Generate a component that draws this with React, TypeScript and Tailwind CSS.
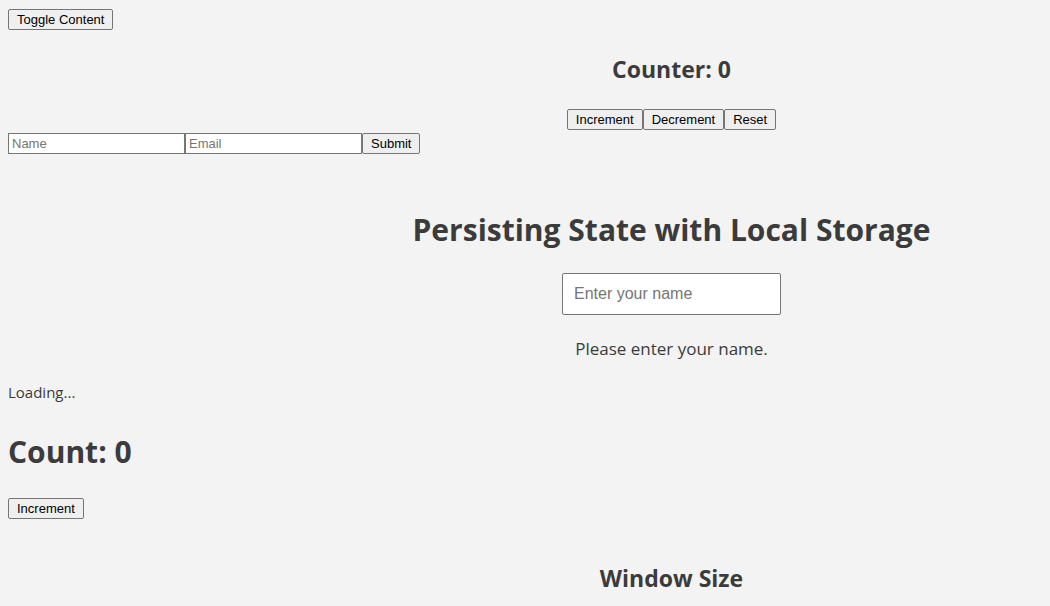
import { useState } from "react";
import type { ButtonHTMLAttributes, FormEvent } from "react";

function Button(props: ButtonHTMLAttributes<HTMLButtonElement>) {
  return (
    <button
      type="button"
      {...props}
      className="h-[21px] rounded-[2px] border border-[#767676] bg-[#efefef] px-2 text-[13px] leading-[15px] text-black font-['Liberation_Sans',Arial,sans-serif]"
    />
  );
}

const field =
  "h-[21px] w-[177px] border border-[#767676] bg-white px-[3px] text-[13px] leading-[15px] text-black placeholder:text-[#757575] font-['Liberation_Sans',Arial,sans-serif]";

function Counter() {
  const [count, setCount] = useState(0);
  return (
    <section className="flex flex-col items-center pl-[293px] pt-[23px]">
      <h2 className="text-[23px] leading-8 font-bold">Counter: {count}</h2>
      <div className="flex pt-6">
        <Button onClick={() => setCount(count + 1)}>Increment</Button>
        <Button onClick={() => setCount(count - 1)}>Decrement</Button>
        <Button onClick={() => setCount(0)}>Reset</Button>
      </div>
    </section>
  );
}

function ContactForm() {
  return (
    <form className="flex pt-[3px]" onSubmit={(e: FormEvent) => e.preventDefault()}>
      <input className={field} type="text" name="name" placeholder="Name" aria-label="Name" />
      <input className={field} type="email" name="email" placeholder="Email" aria-label="Email" />
      <Button type="submit">Submit</Button>
    </form>
  );
}

function PersistedName() {
  const [name, setName] = useState("");
  return (
    <section className="flex flex-col items-center pl-[293px] pt-[54px]">
      <h1 className="text-[30px] leading-[43px] font-bold">Persisting State with Local Storage</h1>
      <input
        className="mt-[22px] h-[42px] w-[219px] rounded-[2px] border border-[#767676] bg-white px-[11px] text-base text-black placeholder:text-[#757575] font-['Liberation_Sans',Arial,sans-serif]"
        type="text"
        placeholder="Enter your name"
        aria-label="Enter your name"
        value={name}
        onChange={(e) => setName(e.target.value)}
      />
      <p className="pt-[22px] text-[17px] leading-6">
        {name ? `Hello, ${name}!` : "Please enter your name."}
      </p>
    </section>
  );
}

function Count() {
  const [count, setCount] = useState(0);
  return (
    <section className="pt-[26px]">
      <h1 className="text-[30px] leading-[43px] font-bold">Count: {count}</h1>
      <div className="flex pt-[25px]">
        <Button onClick={() => setCount(count + 1)}>Increment</Button>
      </div>
    </section>
  );
}

export default function App() {
  const [open, setOpen] = useState(false);
  return (
    <main className="min-h-screen bg-[#f3f3f3] px-2 pt-[9px] text-[#3b3b3b] font-['Open_Sans','Noto_Sans',sans-serif]">
      <div className="flex">
        <Button aria-expanded={open} onClick={() => setOpen(!open)}>
          Toggle Content
        </Button>
      </div>
      <Counter />
      <ContactForm />
      <PersistedName />
      <p className="pt-[19px] text-[15px] leading-6">Loading...</p>
      <Count />
      <section className="flex flex-col items-center pl-[293px] pt-[43px]">
        <h2 className="text-[23px] leading-8 font-bold">Window Size</h2>
      </section>
    </main>
  );
}
